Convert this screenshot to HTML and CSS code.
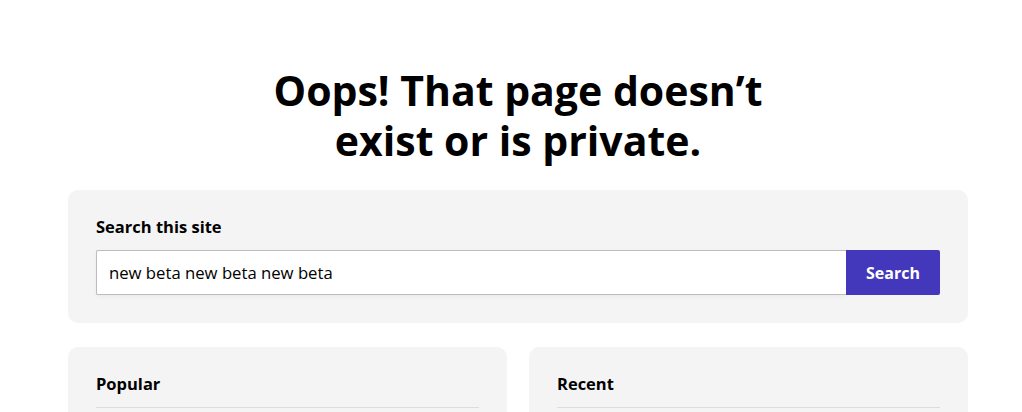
FILE: index.html
```html
<!DOCTYPE html>
<html lang="en">
<head>
    <meta charset="UTF-8">
    <meta name="viewport" content="width=device-width, initial-scale=1.0">
    <title>Page not found</title>
    <link rel="stylesheet" href="styles.css">
</head>
<body>
    <main class="page">
        <h1 class="page-title">Oops! That page doesn’t<br>exist or is private.</h1>

        <form class="search-box" onsubmit="return false;">
            <label class="search-label" for="search-input">Search this site</label>
            <div class="search-row">
                <input type="text" id="search-input" class="search-input" value="new beta new beta new beta">
                <button type="submit" class="search-button">Search</button>
            </div>
        </form>

        <div class="columns">
            <section class="card">
                <h2 class="card-title">Popular</h2>
                <ul class="card-list"></ul>
            </section>
            <section class="card">
                <h2 class="card-title">Recent</h2>
                <ul class="card-list"></ul>
            </section>
        </div>
    </main>
</body>
</html>
```

FILE: styles.css
```css
body {
    margin: 0;
    font-family: "Open Sans", "Noto Sans", sans-serif;
    background-color: #fff;
    color: #000;
}
.page {
    width: 900px;
    margin-left: 68px;
    padding-top: 65px;
}
.page-title {
    margin: 0 0 25px;
    text-align: center;
    font-size: 41px;
    line-height: 50px;
    font-weight: 700;
}
.search-box {
    background-color: #f4f4f4;
    border-radius: 10px;
    padding: 26px 28px 28px;
}
.search-label {
    display: block;
    font-size: 16.5px;
    line-height: 22px;
    font-weight: 700;
    margin-bottom: 12px;
}
.search-row {
    display: flex;
}
.search-input {
    flex-grow: 1;
    height: 45px;
    box-sizing: border-box;
    padding: 0 12px;
    border: 1px solid #bdbdbd;
    border-right: none;
    border-radius: 2px 0 0 2px;
    font-family: inherit;
    font-size: 16.7px;
    color: #000;
    background-color: #fff;
    box-shadow: 0 2px 4px rgba(0, 0, 0, 0.04);
}
.search-button {
    width: 94px;
    height: 45px;
    border: none;
    border-radius: 0 2px 2px 0;
    background-color: #4338bc;
    color: #fff;
    font-family: inherit;
    font-size: 16px;
    font-weight: 700;
    cursor: pointer;
}
.columns {
    display: grid;
    grid-template-columns: 1fr 1fr;
    gap: 22px;
    margin-top: 24px;
}
.card {
    background-color: #f4f4f4;
    border-radius: 10px;
    padding: 26px 28px;
    min-height: 200px;
}
.card-title {
    margin: 0;
    padding-bottom: 12px;
    font-size: 16.5px;
    line-height: 22px;
    font-weight: 700;
    border-bottom: 1px solid #dcdcdc;
}
.card-list {
    list-style: none;
    margin: 0;
    padding: 0;
}
```
